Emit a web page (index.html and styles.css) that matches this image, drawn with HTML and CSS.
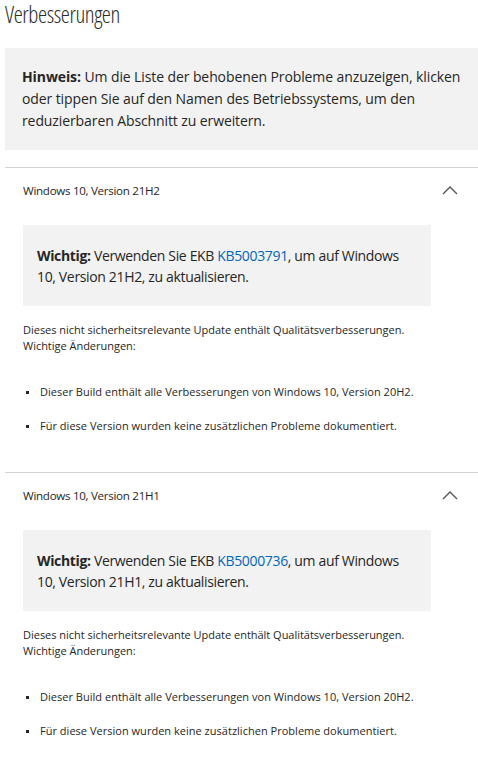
FILE: index.html
```html
<!DOCTYPE html>
<html lang="de">
<head>
    <meta charset="UTF-8">
    <meta name="viewport" content="width=device-width, initial-scale=1.0">
    <title>Verbesserungen</title>
    <link rel="stylesheet" href="styles.css">
</head>
<body>
    <div class="page">
        <h2 class="page-title">Verbesserungen</h2>

        <div class="note">
            <p><b>Hinweis:</b> Um die Liste der behobenen Probleme anzuzeigen, klicken oder tippen Sie auf den Namen des Betriebssystems, um den reduzierbaren Abschnitt zu erweitern.</p>
        </div>

        <section class="release">
            <div class="release-header">
                <span>Windows 10, Version 21H2</span>
                <svg class="chevron" width="16" height="10" viewBox="0 0 16 10"><polyline points="1,9 8,2 15,9" fill="none" stroke="#555" stroke-width="1.4"/></svg>
            </div>
            <div class="release-body">
                <div class="alert">
                    <p><b>Wichtig:</b> Verwenden Sie EKB <a href="#">KB5003791</a>, um auf Windows 10, Version 21H2, zu aktualisieren.</p>
                </div>
                <p class="intro">Dieses nicht sicherheitsrelevante Update enthält Qualitätsverbesserungen.<br>Wichtige Änderungen:</p>
                <ul class="changes">
                    <li>Dieser Build enthält alle Verbesserungen von Windows 10, Version 20H2.</li>
                    <li>Für diese Version wurden keine zusätzlichen Probleme dokumentiert.</li>
                </ul>
            </div>
        </section>

        <section class="release">
            <div class="release-header">
                <span>Windows 10, Version 21H1</span>
                <svg class="chevron" width="16" height="10" viewBox="0 0 16 10"><polyline points="1,9 8,2 15,9" fill="none" stroke="#555" stroke-width="1.4"/></svg>
            </div>
            <div class="release-body">
                <div class="alert">
                    <p><b>Wichtig:</b> Verwenden Sie EKB <a href="#">KB5000736</a>, um auf Windows 10, Version 21H1, zu aktualisieren.</p>
                </div>
                <p class="intro">Dieses nicht sicherheitsrelevante Update enthält Qualitätsverbesserungen.<br>Wichtige Änderungen:</p>
                <ul class="changes">
                    <li>Dieser Build enthält alle Verbesserungen von Windows 10, Version 20H2.</li>
                    <li>Für diese Version wurden keine zusätzlichen Probleme dokumentiert.</li>
                </ul>
            </div>
        </section>
    </div>
</body>
</html>
```

FILE: styles.css
```css
body {
    font-family: "Open Sans", "Noto Sans", sans-serif;
    margin: 0;
    background-color: #fff;
    color: #262626;
}

.page {
    padding: 0 0 0 5px;
}

p {
    margin: 0;
}

.page-title {
    margin: 0;
    padding-top: 1px;
    font-size: 23px;
    font-weight: 300;
    font-stretch: 87%;
    line-height: 27px;
    color: #2b2b2b;
    letter-spacing: -0.4px;
}

.note {
    margin-top: 20px;
    padding: 18px 8px 18px 17px;
    background-color: #f2f2f2;
    font-size: 14px;
    line-height: 22px;
    letter-spacing: -0.1px;
}

.note b,
.alert b {
    font-weight: 700;
}

.release {
    margin-top: 17px;
    border-top: 1px solid #d2d2d2;
}

.release + .release {
    margin-top: 0;
}

.release-header {
    display: flex;
    justify-content: space-between;
    align-items: center;
    height: 44px;
    padding: 0 20px 0 18px;
    font-size: 11.6px;
    color: #262626;
    letter-spacing: -0.3px;
}

.chevron {
    display: block;
}

.release-body {
    padding: 13px 0 38px 18px;
}

.alert {
    width: 408px;
    box-sizing: border-box;
    padding: 20px 14px 19px;
    background-color: #f2f2f2;
    font-size: 14px;
    line-height: 21px;
    letter-spacing: -0.35px;
}

.alert a {
    color: #0067b8;
    text-decoration: none;
}

.intro {
    margin-top: 16px;
    font-size: 11px;
    line-height: 16px;
    letter-spacing: -0.02px;
}

.changes {
    list-style: none;
    margin: 30px 0 0;
    padding: 0;
    font-size: 11px;
    line-height: 16px;
    letter-spacing: 0.02px;
}

.changes li {
    display: flex;
    align-items: center;
    gap: 11px;
    padding-left: 3px;
}

.changes li + li {
    margin-top: 18px;
}

.changes li::before {
    content: "";
    width: 3px;
    height: 3px;
    flex: none;
    background-color: #262626;
}
```
